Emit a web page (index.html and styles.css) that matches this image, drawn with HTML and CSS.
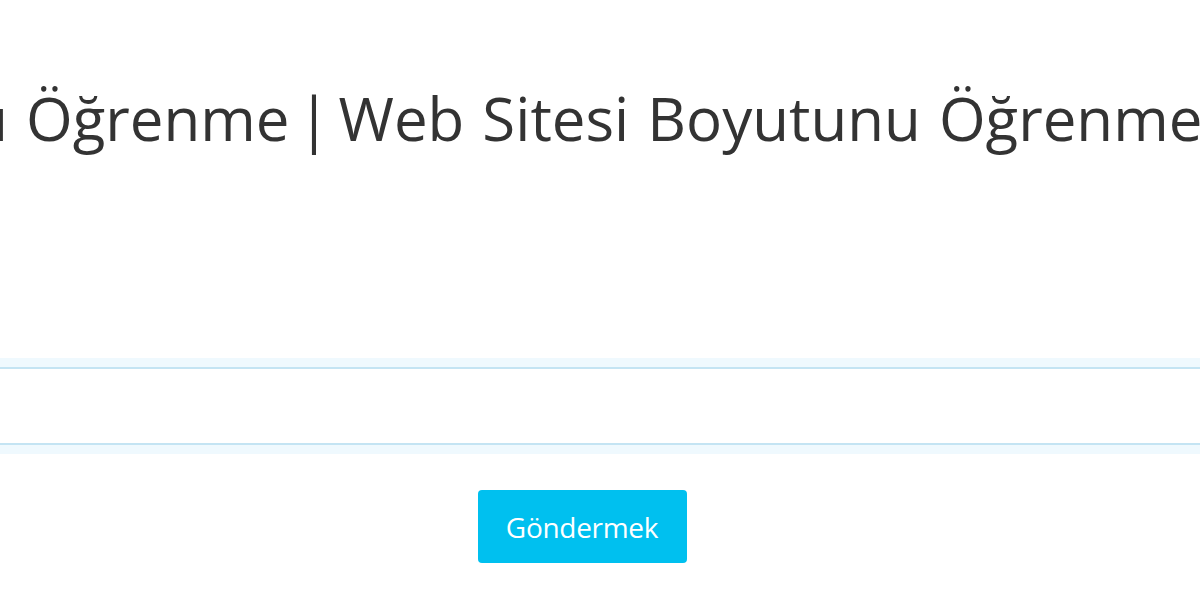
FILE: index.html
```html
<!DOCTYPE html>
<html lang="tr">

<head>
    <meta charset="UTF-8">
    <meta name="viewport" content="width=device-width, initial-scale=1.0">
    <title>Web Sitesi Boyutunu Öğrenme</title>
    <link rel="stylesheet" href="styles.css">
</head>

<body>
    <div class="page">
        <div class="title-row">
            <h1 class="title">Web Sitesi Boyutunu Öğrenme<span class="sep">|</span>Web Sitesi Boyutunu Öğrenme</h1>
        </div>

        <div class="form">
            <div class="field">
                <input type="text" class="url-input" name="url">
            </div>
            <div class="actions">
                <button class="send-button">Göndermek</button>
            </div>
        </div>
    </div>
</body>

</html>
```

FILE: styles.css
```css
html,
body {
    margin: 0;
    padding: 0;
    background-color: #fff;
    overflow: hidden;
    font-family: "Open Sans", "Noto Sans", Arial, sans-serif;
}

.page {
    width: 1200px;
    height: 600px;
}

.title-row {
    display: flex;
    justify-content: center;
    width: 628px;
    padding-top: 76px;
}

.title {
    margin: 0;
    white-space: nowrap;
    font-weight: 400;
    font-size: 60px;
    line-height: 84px;
    word-spacing: 2.5px;
    color: #333;
}

.title .sep {
    margin: 0 8px;
}

.form {
    padding-top: 207px;
}

.field {
    margin: 0 -20px;
}

.url-input {
    display: block;
    width: 100%;
    height: 78px;
    box-sizing: border-box;
    border: 2px solid #c4e4f3;
    box-shadow: 0 0 0 9px #eff9fe;
    outline: none;
    background: #fff;
}

.actions {
    display: flex;
    justify-content: center;
    width: 1164px;
    padding-top: 45px;
}

.send-button {
    width: 209px;
    height: 73px;
    background-color: #00c0ef;
    border: none;
    border-radius: 4px;
    color: #fff;
    font-family: "Open Sans", "Noto Sans", Arial, sans-serif;
    font-size: 28px;
    font-weight: 500;
    letter-spacing: -0.3px;
    cursor: pointer;
}
```
